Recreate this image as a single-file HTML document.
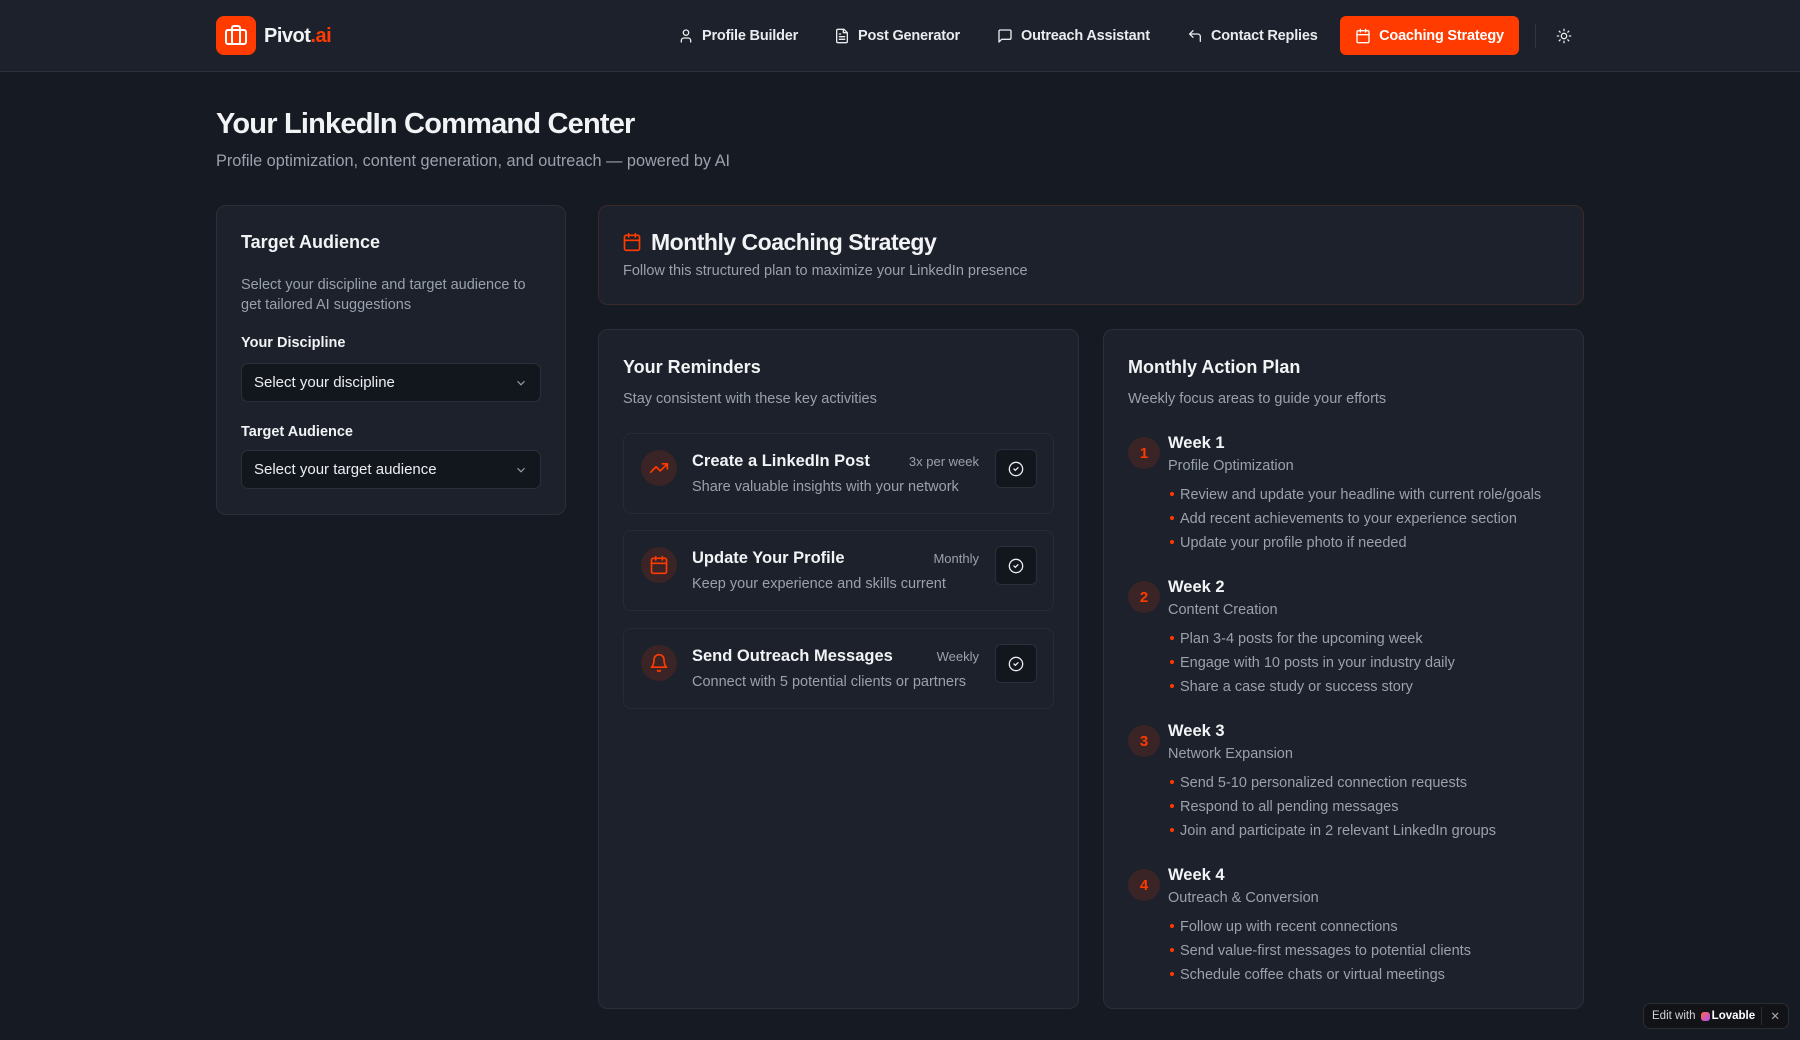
<!DOCTYPE html>
<html><head><meta charset="utf-8"><style>
*{box-sizing:border-box;margin:0;padding:0}
body{width:1800px;height:1040px;overflow:hidden;background:#161a22;font-family:"Liberation Sans",sans-serif;color:#f2f3f5;position:relative}
.abs{position:absolute}
.hdr{left:0;top:0;width:1800px;height:72px;background:#1c212b;border-bottom:1px solid #2b313c}
.nav{top:0;height:72px;display:flex;align-items:center;font-size:14.5px;font-weight:bold;color:#e9ebee;gap:8px;letter-spacing:-0.2px}
.nav svg{width:16px;height:16px}
.card{background:#1c212b;border:1px solid #2a303b;border-radius:10px}
.muted{color:#9aa1ad}
.sel{background:#12161d;border:1px solid #2a303b;border-radius:7px;height:39px;display:flex;align-items:center;justify-content:space-between;padding:0 12px;font-size:15px;color:#eceef1}
.item{left:623px;width:431px;height:81px;border:1px solid #262c36;border-radius:8px;background:#1c212b}
.ic{left:17px;top:16px;width:36px;height:36px;border-radius:50%;background:#3a2426;display:flex;align-items:center;justify-content:center}
.it{left:68px;top:18px;font-size:16.5px;font-weight:bold;color:#f2f3f5}
.id{left:68px;top:45px;font-size:14.5px;color:#9aa1ad}
.fr{right:74px;top:20px;font-size:13px;color:#9aa1ad}
.ck{right:16px;top:15px;width:42px;height:39px;border:1px solid #2a303b;border-radius:6px;background:#12161d;display:flex;align-items:center;justify-content:center}
.wk{left:1128px;width:440px}
.num{left:0;top:0;width:32px;height:32px;border-radius:50%;background:#3a2426;color:#ff3b00;font-size:15px;font-weight:bold;display:flex;align-items:center;justify-content:center}
.wt{left:40px;top:-3px;font-size:16.5px;font-weight:bold}
.ws{left:40px;top:21px;font-size:14.5px;color:#9aa1ad}
.bl{left:40px;font-size:14.5px;color:#9aa1ad;padding-left:12px}
.bl:before{content:"";position:absolute;left:2px;top:5px;width:4px;height:4px;border-radius:50%;background:#ff3b00}
</style></head><body>
<div class="abs hdr"></div>
<div class="abs" style="left:216px;top:16px;width:40px;height:39px;background:#ff3b00;border-radius:8px;display:flex;align-items:center;justify-content:center">
<svg width="24" height="24" viewBox="0 0 24 24" fill="none" stroke="#fff" stroke-width="2" stroke-linecap="round" stroke-linejoin="round"><path d="M16 20V4a2 2 0 0 0-2-2h-4a2 2 0 0 0-2 2v16"/><rect x="2" y="6" width="20" height="14" rx="2"/></svg></div>
<div class="abs" style="left:264px;top:25px;font-size:20px;font-weight:bold;letter-spacing:-0.5px">Pivot<span style="color:#ff3b00">.ai</span></div>

<div class="abs nav" style="left:678px"><svg viewBox="0 0 24 24" fill="none" stroke="#e9ebee" stroke-width="2" stroke-linecap="round"><path d="M19 21v-2a4 4 0 0 0-4-4H9a4 4 0 0 0-4 4v2"/><circle cx="12" cy="7" r="4"/></svg>Profile Builder</div>
<div class="abs nav" style="left:834px"><svg viewBox="0 0 24 24" fill="none" stroke="#e9ebee" stroke-width="2" stroke-linecap="round" stroke-linejoin="round"><path d="M15 2H6a2 2 0 0 0-2 2v16a2 2 0 0 0 2 2h12a2 2 0 0 0 2-2V7z"/><path d="M14 2v5h5M16 13H8M16 17H8M10 9H8"/></svg>Post Generator</div>
<div class="abs nav" style="left:997px"><svg viewBox="0 0 24 24" fill="none" stroke="#e9ebee" stroke-width="2" stroke-linejoin="round"><path d="M21 15a2 2 0 0 1-2 2H7l-4 4V5a2 2 0 0 1 2-2h14a2 2 0 0 1 2 2z"/></svg>Outreach Assistant</div>
<div class="abs nav" style="left:1187px"><svg viewBox="0 0 24 24" fill="none" stroke="#e9ebee" stroke-width="2" stroke-linecap="round" stroke-linejoin="round"><path d="M9 14 4 9l5-5"/><path d="M20 20v-7a4 4 0 0 0-4-4H4"/></svg>Contact Replies</div>
<div class="abs nav" style="left:1340px;top:16px;height:39px;width:179px;background:#ff3b00;border-radius:6px;justify-content:center;color:#fff"><svg viewBox="0 0 24 24" fill="none" stroke="#fff" stroke-width="2" stroke-linecap="round"><rect x="3" y="4" width="18" height="18" rx="2"/><path d="M16 2v4M8 2v4M3 10h18"/></svg>Coaching Strategy</div>
<div class="abs" style="left:1535px;top:24px;width:1px;height:24px;background:#2f3541"></div>
<svg class="abs" style="left:1556px;top:28px" width="16" height="16" viewBox="0 0 24 24" fill="none" stroke="#e9ebee" stroke-width="2" stroke-linecap="round"><circle cx="12" cy="12" r="4"/><path d="M12 2v2M12 20v2M4.9 4.9l1.4 1.4M17.7 17.7l1.4 1.4M2 12h2M20 12h2M6.3 17.7l-1.4 1.4M19.1 4.9l-1.4 1.4"/></svg>

<div class="abs" style="left:216px;top:108px;font-size:29px;font-weight:bold;letter-spacing:-0.8px">Your LinkedIn Command Center</div>
<div class="abs muted" style="left:216px;top:152px;font-size:16.3px">Profile optimization, content generation, and outreach — powered by AI</div>

<div class="abs card" style="left:216px;top:205px;width:350px;height:310px"></div>
<div class="abs" style="left:241px;top:232px;font-size:18px;font-weight:bold">Target Audience</div>
<div class="abs muted" style="left:241px;top:275px;width:300px;font-size:14.5px;line-height:20px">Select your discipline and target audience to get tailored AI suggestions</div>
<div class="abs" style="left:241px;top:335px;font-size:14.5px;font-weight:bold">Your Discipline</div>
<div class="abs sel" style="left:241px;top:363px;width:300px"><span>Select your discipline</span><svg width="14" height="14" viewBox="0 0 24 24" fill="none" stroke="#9aa1ad" stroke-width="2"><path d="m6 9 6 6 6-6"/></svg></div>
<div class="abs" style="left:241px;top:424px;font-size:14.5px;font-weight:bold">Target Audience</div>
<div class="abs sel" style="left:241px;top:450px;width:300px"><span>Select your target audience</span><svg width="14" height="14" viewBox="0 0 24 24" fill="none" stroke="#9aa1ad" stroke-width="2"><path d="m6 9 6 6 6-6"/></svg></div>

<div class="abs card" style="left:598px;top:205px;width:986px;height:100px;border-color:#3a2a2a"></div>
<svg class="abs" style="left:622px;top:232px" width="20" height="20" viewBox="0 0 24 24" fill="none" stroke="#ff3b00" stroke-width="2" stroke-linecap="round"><rect x="3" y="4" width="18" height="18" rx="2"/><path d="M16 2v4M8 2v4M3 10h18"/></svg>
<div class="abs" style="left:651px;top:229px;font-size:23px;font-weight:bold;letter-spacing:-0.5px">Monthly Coaching Strategy</div>
<div class="abs muted" style="left:623px;top:263px;font-size:14.5px">Follow this structured plan to maximize your LinkedIn presence</div>

<div class="abs card" style="left:598px;top:329px;width:481px;height:680px"></div>
<div class="abs" style="left:623px;top:357px;font-size:18px;font-weight:bold">Your Reminders</div>
<div class="abs muted" style="left:623px;top:391px;font-size:14.5px">Stay consistent with these key activities</div>

<div class="abs item" style="top:433px">
<div class="abs ic"><svg width="20" height="20" viewBox="0 0 24 24" fill="none" stroke="#ff3b00" stroke-width="2" stroke-linecap="round" stroke-linejoin="round"><path d="m22 7-8.5 8.5-5-5L2 17"/><path d="M16 7h6v6"/></svg></div>
<div class="abs it">Create a LinkedIn Post</div><div class="abs fr">3x per week</div>
<div class="abs id">Share valuable insights with your network</div>
<div class="abs ck"><svg width="16" height="16" viewBox="0 0 24 24" fill="none" stroke="#e9ebee" stroke-width="2" stroke-linecap="round"><circle cx="12" cy="12" r="10"/><path d="m9 12 2 2 4-4"/></svg></div></div>

<div class="abs item" style="top:530px">
<div class="abs ic"><svg width="20" height="20" viewBox="0 0 24 24" fill="none" stroke="#ff3b00" stroke-width="2" stroke-linecap="round"><rect x="3" y="4" width="18" height="18" rx="2"/><path d="M16 2v4M8 2v4M3 10h18"/></svg></div>
<div class="abs it">Update Your Profile</div><div class="abs fr">Monthly</div>
<div class="abs id">Keep your experience and skills current</div>
<div class="abs ck"><svg width="16" height="16" viewBox="0 0 24 24" fill="none" stroke="#e9ebee" stroke-width="2" stroke-linecap="round"><circle cx="12" cy="12" r="10"/><path d="m9 12 2 2 4-4"/></svg></div></div>

<div class="abs item" style="top:628px">
<div class="abs ic"><svg width="20" height="20" viewBox="0 0 24 24" fill="none" stroke="#ff3b00" stroke-width="2" stroke-linecap="round" stroke-linejoin="round"><path d="M6 8a6 6 0 0 1 12 0c0 7 3 9 3 9H3s3-2 3-9"/><path d="M10.3 21a1.94 1.94 0 0 0 3.4 0"/></svg></div>
<div class="abs it">Send Outreach Messages</div><div class="abs fr">Weekly</div>
<div class="abs id">Connect with 5 potential clients or partners</div>
<div class="abs ck"><svg width="16" height="16" viewBox="0 0 24 24" fill="none" stroke="#e9ebee" stroke-width="2" stroke-linecap="round"><circle cx="12" cy="12" r="10"/><path d="m9 12 2 2 4-4"/></svg></div></div>

<div class="abs card" style="left:1103px;top:329px;width:481px;height:680px"></div>
<div class="abs" style="left:1128px;top:357px;font-size:18px;font-weight:bold">Monthly Action Plan</div>
<div class="abs muted" style="left:1128px;top:391px;font-size:14.5px">Weekly focus areas to guide your efforts</div>

<div class="abs wk" style="top:437px"><div class="abs num">1</div><div class="abs wt">Week 1</div><div class="abs ws">Profile Optimization</div>
<div class="abs bl" style="top:50px">Review and update your headline with current role/goals</div>
<div class="abs bl" style="top:74px">Add recent achievements to your experience section</div>
<div class="abs bl" style="top:98px">Update your profile photo if needed</div></div>

<div class="abs wk" style="top:581px"><div class="abs num">2</div><div class="abs wt">Week 2</div><div class="abs ws">Content Creation</div>
<div class="abs bl" style="top:50px">Plan 3-4 posts for the upcoming week</div>
<div class="abs bl" style="top:74px">Engage with 10 posts in your industry daily</div>
<div class="abs bl" style="top:98px">Share a case study or success story</div></div>

<div class="abs wk" style="top:725px"><div class="abs num">3</div><div class="abs wt">Week 3</div><div class="abs ws">Network Expansion</div>
<div class="abs bl" style="top:50px">Send 5-10 personalized connection requests</div>
<div class="abs bl" style="top:74px">Respond to all pending messages</div>
<div class="abs bl" style="top:98px">Join and participate in 2 relevant LinkedIn groups</div></div>

<div class="abs wk" style="top:869px"><div class="abs num">4</div><div class="abs wt">Week 4</div><div class="abs ws">Outreach &amp; Conversion</div>
<div class="abs bl" style="top:50px">Follow up with recent connections</div>
<div class="abs bl" style="top:74px">Send value-first messages to potential clients</div>
<div class="abs bl" style="top:98px">Schedule coffee chats or virtual meetings</div></div>

<div class="abs" style="left:1643px;top:1003px;width:146px;height:26px;background:#111317;border:1px solid #2a2d33;border-radius:7px;font-size:11.5px;color:#d0d3d8;display:flex;align-items:center;padding-left:8px">Edit with&nbsp;<span style="display:inline-block;width:9px;height:9px;border-radius:3px;background:linear-gradient(135deg,#ff6a3d,#b14cff);margin:0 2px"></span><b style="color:#fff">Lovable</b><span style="position:absolute;right:26px;top:3px;width:1px;height:18px;background:#2a2d33"></span><span style="position:absolute;right:8px;top:5px;color:#aaa">✕</span></div>
</body></html>
